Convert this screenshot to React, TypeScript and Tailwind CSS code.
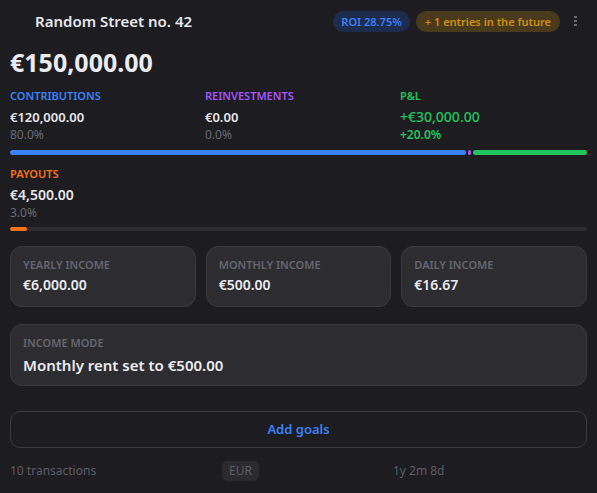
const Stat = ({
  label,
  value,
  sub,
  color,
  valueColor,
  subColor,
}: {
  label: string
  value: string
  sub: string
  color: string
  valueColor?: string
  subColor?: string
}) => (
  <div className="flex flex-col">
    <div className={`text-[11px] font-semibold uppercase leading-[16px] ${color}`}>{label}</div>
    <div className={`mt-[4px] leading-[18px] ${valueColor ?? "text-[13px] font-semibold text-[#e6e6ea]"}`}>
      {value}
    </div>
    <div className={`text-[12px] leading-[18px] ${subColor ?? "text-[#6a6a72]"}`}>{sub}</div>
  </div>
)

const IncomeCard = ({ label, value }: { label: string; value: string }) => (
  <div className="h-[61px] rounded-[12px] border border-[#3a3a40] bg-[#2c2c31] px-[12px] pt-[10px]">
    <div className="text-[11px] font-semibold uppercase leading-[16px] text-[#66666e]">{label}</div>
    <div className="mt-[2px] text-[14px] font-semibold leading-[20px] text-[#ececf0]">{value}</div>
  </div>
)

export default function App() {
  return (
    <div
      className="h-[493px] w-[597px] overflow-hidden bg-[#1c1c21] px-[10px] text-[#e6e6ea]"
      style={{ fontFamily: '"Noto Sans", "Open Sans", sans-serif' }}
    >
      {/* header */}
      <div className="flex h-[42px] items-center">
        <div className="ml-[25px] text-[15px] font-semibold text-[#e8e8ec]">Random Street no. 42</div>
        <div className="ml-auto flex items-center gap-[6px]">
          <span className="rounded-full bg-[#1d2b4d] px-[8px] py-[3px] text-[11px] font-semibold leading-[15px] text-[#3b82f6]">
            ROI 28.75%
          </span>
          <span className="rounded-full bg-[#4a3a1c] px-[9px] py-[3px] text-[11px] font-semibold leading-[15px] text-[#d08f12]">
            + 1 entries in the future
          </span>
        </div>
        <div className="ml-[14px] mr-[10px] flex flex-col gap-[2px]">
          <span className="h-[2px] w-[3px] bg-[#6a6a72]" />
          <span className="h-[2px] w-[3px] bg-[#6a6a72]" />
          <span className="h-[2px] w-[3px] bg-[#6a6a72]" />
        </div>
      </div>

      <div className="mt-[3px] text-[25px] font-bold leading-[34px] text-[#ececf0]">€150,000.00</div>

      {/* breakdown */}
      <div className="mt-[9px] grid grid-cols-3 gap-[8px]">
        <Stat label="Contributions" value="€120,000.00" sub="80.0%" color="text-[#3b82f6]" />
        <Stat label="Reinvestments" value="€0.00" sub="0.0%" color="text-[#a855f7]" />
        <Stat
          label="P&L"
          value="+€30,000.00"
          sub="+20.0%"
          color="text-[#22c55e]"
          valueColor="text-[14px] font-medium text-[#22c55e]"
          subColor="text-[#22c55e] font-semibold"
        />
      </div>
      <div className="mt-[6px] flex h-[5px] gap-[2px]">
        <div className="h-full w-[456px] rounded-full bg-[#3b82f6]" />
        <div className="h-full w-[3px] rounded-full bg-[#a855f7]" />
        <div className="h-full flex-1 rounded-full bg-[#22c55e]" />
      </div>

      <div className="mt-[11px]">
        <Stat
          label="Payouts"
          value="€4,500.00"
          sub="3.0%"
          color="text-[#f97316]"
          valueColor="text-[14px] font-semibold text-[#e6e6ea]"
        />
      </div>
      <div className="mt-[5px] h-[4px] rounded-full bg-[#2c2c31]">
        <div className="h-full w-[17px] rounded-full bg-[#f97316]" />
      </div>

      {/* income */}
      <div className="mt-[15px] grid grid-cols-3 gap-[10px]">
        <IncomeCard label="Yearly income" value="€6,000.00" />
        <IncomeCard label="Monthly income" value="€500.00" />
        <IncomeCard label="Daily income" value="€16.67" />
      </div>

      <div className="mt-[17px] h-[62px] rounded-[12px] border border-[#3a3a40] bg-[#2c2c31] px-[12px] pt-[10px]">
        <div className="text-[11px] font-semibold uppercase leading-[16px] text-[#66666e]">Income mode</div>
        <div className="mt-[3px] text-[15px] font-semibold leading-[22px] text-[#ececf0]">
          Monthly rent set to €500.00
        </div>
      </div>

      <button className="mt-[25px] flex h-[37px] w-full items-center justify-center rounded-[10px] border border-[#3a3a40] text-[13px] font-semibold text-[#3b82f6]">
        Add goals
      </button>

      {/* footer */}
      <div className="mt-[13px] flex items-center text-[12px] text-[#5e5e66]">
        <span className="w-[212px]">10 transactions</span>
        <span className="rounded-[5px] bg-[#2a2a2f] px-[7px] py-[2px] leading-[16px]">EUR</span>
        <span className="ml-[134px]">1y 2m 8d</span>
      </div>
    </div>
  )
}
